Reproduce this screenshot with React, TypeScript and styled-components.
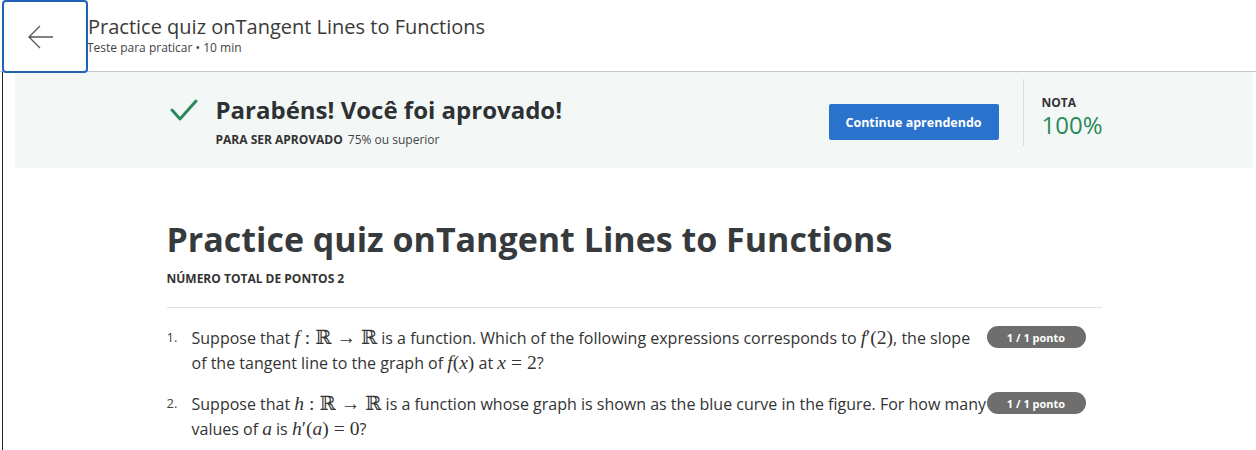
import React from "react";
import styled, { createGlobalStyle } from "styled-components";

const Global = createGlobalStyle`
  html, body { margin: 0; padding: 0; background: #fff; }
  body { font-family: "Open Sans", "Noto Sans", sans-serif; color: #333; overflow: hidden; height: 450px; }
`;

const Page = styled.div`
  width: 1256px;
  height: 450px;
  display: flex;
  flex-direction: column;
  overflow: hidden;
`;

const Header = styled.header`
  height: 72px;
  display: flex;
  align-items: flex-start;
  border-bottom: 1px solid #c4c4c4;
  box-sizing: border-box;
  flex-shrink: 0;
`;

const BackButton = styled.button`
  margin-left: 2px;
  width: 86px;
  height: 73px;
  box-sizing: border-box;
  border: 2px solid #1f63b8;
  border-radius: 4px;
  background: #fff;
  display: flex;
  align-items: center;
  justify-content: center;
  padding: 0 8px 0 0;
  flex-shrink: 0;
  position: relative;
  z-index: 1;
`;

const HeaderText = styled.div`
  display: flex;
  flex-direction: column;
  padding-top: 13px;
`;

const HeaderTitle = styled.h1`
  margin: 0;
  font-size: 20px;
  font-weight: 400;
  line-height: 27px;
  color: #3a3a3a;
`;

const HeaderSub = styled.div`
  font-size: 12px;
  line-height: 15px;
  color: #444;
  margin-left: -1px;
`;

const Main = styled.main`
  margin-left: 2px;
  border-left: 1px solid #222;
  flex: 1;
  display: flex;
  flex-direction: column;
`;

const Banner = styled.section`
  margin: 0 3px 0 12px;
  height: 96px;
  background: #f3f8f7;
  display: flex;
  justify-content: center;
`;

const BannerInner = styled.div`
  width: 935px;
  display: flex;
  align-items: center;
`;

const Check = styled.div`
  width: 49px;
  display: flex;
  align-self: flex-start;
  margin-top: 27px;
  padding-left: 3px;
  box-sizing: border-box;
`;

const Pass = styled.div`
  flex: 1;
  display: flex;
  flex-direction: column;
  margin-top: 3px;
`;

const PassTitle = styled.div`
  font-size: 24px;
  font-weight: 700;
  color: #2e3133;
  line-height: 30px;
`;

const PassSub = styled.div`
  margin-top: 6px;
  font-size: 12px;
  color: #444;
  display: flex;
  gap: 5px;
  strong { font-weight: 700; color: #333; }
`;

const PrimaryButton = styled.button`
  width: 170px;
  height: 36px;
  background: #2a73cc;
  border: none;
  border-radius: 2px;
  color: #fff;
  font-family: "Open Sans", sans-serif;
  font-weight: 700;
  font-size: 12.5px;
  margin-right: 24px;
  margin-top: 4px;
`;

const Divider = styled.div`
  width: 1px;
  height: 67px;
  background: #ddd;
  margin-right: 18px;
  margin-top: -15px;
`;

const Grade = styled.div`
  display: flex;
  flex-direction: column;
  align-self: flex-start;
  margin-top: 23px;
  width: 60px;
`;

const GradeLabel = styled.div`
  font-size: 12px;
  font-weight: 700;
  color: #333;
  line-height: 16px;
`;

const GradeValue = styled.div`
  font-size: 24px;
  color: #2b8a5a;
  line-height: 28px;
`;

const ContentWrap = styled.div`
  margin: 0 3px 0 12px;
  display: flex;
  justify-content: center;
`;

const Content = styled.div`
  width: 935px;
  padding-top: 49px;
`;

const Title = styled.h2`
  margin: 0;
  font-size: 34px;
  font-weight: 700;
  line-height: 44px;
  color: #373a3c;
`;

const TotalPoints = styled.div`
  margin-top: 9px;
  font-size: 12px;
  font-weight: 700;
  color: #333;
  padding-bottom: 20px;
  border-bottom: 1px solid #e1e1e1;
`;

const List = styled.ol`
  list-style: none;
  margin: 0;
  padding: 18px 0 0 0;
  display: flex;
  flex-direction: column;
  gap: 16px;
`;

const Item = styled.li`
  display: flex;
  font-size: 16px;
  line-height: 25px;
  color: #333;
`;

const Num = styled.span`
  width: 25px;
  flex-shrink: 0;
  font-size: 13px;
  color: #444;
  line-height: 23px;
`;

const QText = styled.div`
  flex: 1;
`;

const Badge = styled.span`
  float: right;
  margin: 0 16px 0 0;
  height: 22px;
  width: 99px;
  border-radius: 11px;
  background: #6e6e6e;
  color: #fff;
  font-size: 11px;
  font-weight: 700;
  display: flex;
  align-items: center;
  justify-content: center;
  box-sizing: border-box;
`;

const M = styled.span<{ $i?: boolean }>`
  font-family: "Liberation Serif", "DejaVu Serif", serif;
  font-size: 19.5px;
  line-height: 1;
  font-style: ${(p) => (p.$i ? "italic" : "normal")};
`;

const Op = styled.span`
  font-family: "Liberation Serif", "DejaVu Serif", serif;
  font-size: 19.5px;
  line-height: 1;
  padding: 0 5px;
`;

const Arrow = () => (
  <svg width="28" height="26" viewBox="0 0 28 26" fill="none">
    <path d="M26 13H2M13 2L2 13l11 11" stroke="#555" strokeWidth="1.3" />
  </svg>
);

const CheckIcon = () => (
  <svg width="28" height="22" viewBox="0 0 28 22" fill="none">
    <path d="M2 11l8 9L26 2" stroke="#2b8a5a" strokeWidth="3" strokeLinecap="round" strokeLinejoin="round" />
  </svg>
);

export default function App() {
  return (
    <>
      <Global />
      <Page>
        <Header>
          <BackButton aria-label="Voltar">
            <Arrow />
          </BackButton>
          <HeaderText>
            <HeaderTitle>Practice quiz onTangent Lines to Functions</HeaderTitle>
            <HeaderSub>Teste para praticar • 10 min</HeaderSub>
          </HeaderText>
        </Header>
        <Main>
          <Banner>
            <BannerInner>
              <Check>
                <CheckIcon />
              </Check>
              <Pass>
                <PassTitle>Parabéns! Você foi aprovado!</PassTitle>
                <PassSub>
                  <strong>PARA SER APROVADO</strong>
                  <span>75% ou superior</span>
                </PassSub>
              </Pass>
              <PrimaryButton>Continue aprendendo</PrimaryButton>
              <Divider />
              <Grade>
                <GradeLabel>NOTA</GradeLabel>
                <GradeValue>100%</GradeValue>
              </Grade>
            </BannerInner>
          </Banner>
          <ContentWrap>
            <Content>
              <Title>Practice quiz onTangent Lines to Functions</Title>
              <TotalPoints>NÚMERO TOTAL DE PONTOS 2</TotalPoints>
              <List>
                <Item>
                  <Num>1.</Num>
                  <QText>
                    <Badge>1 / 1 ponto</Badge>
                    Suppose that <M $i>f</M><Op>:</Op><M>ℝ</M><Op>→</Op><M>ℝ</M> is a function. Which of the following expressions corresponds to{" "}
                    <M $i>f</M><M>′(2)</M>, the slope of the tangent line to the graph of <M $i>f</M><M>(</M><M $i>x</M><M>)</M> at{" "}
                    <M $i>x</M><Op>=</Op><M>2</M>?
                  </QText>
                </Item>
                <Item>
                  <Num>2.</Num>
                  <QText>
                    <Badge>1 / 1 ponto</Badge>
                    Suppose that <M $i>h</M><Op>:</Op><M>ℝ</M><Op>→</Op><M>ℝ</M> is a function whose graph is shown as the blue curve in the figure. For how many
                    values of <M $i>a</M> is <M $i>h</M><M>′(</M><M $i>a</M><M>)</M><Op>=</Op><M>0</M>?
                  </QText>
                </Item>
                <Item>
                  <Num></Num>
                  <QText>
                    <M>(a)</M> <M $i>f</M><M>′′(2)</M><Op>=</Op><M>2</M>
                  </QText>
                </Item>
              </List>
            </Content>
          </ContentWrap>
        </Main>
      </Page>
    </>
  );
}
